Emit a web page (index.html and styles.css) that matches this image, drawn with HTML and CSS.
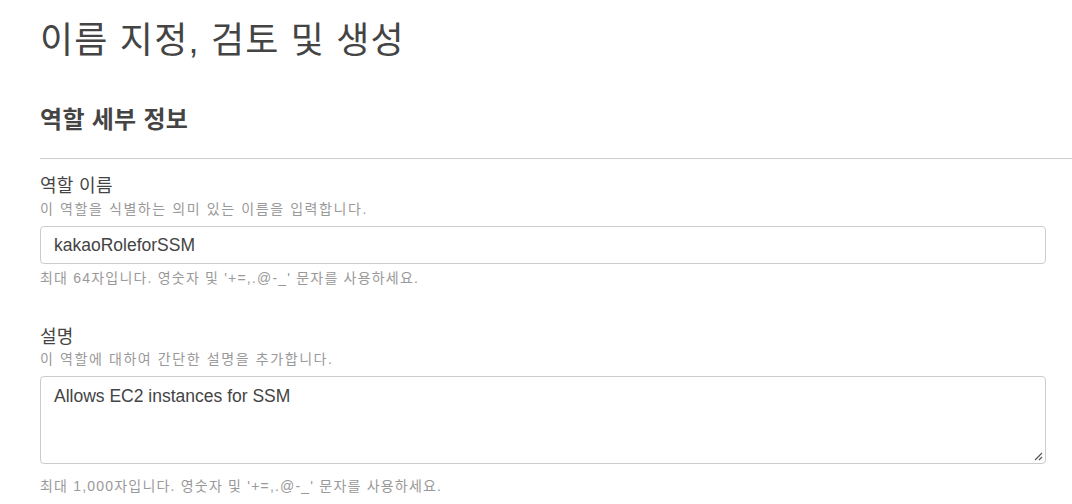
FILE: index.html
```html
<!DOCTYPE html>
<html lang="ko">
<head>
<meta charset="utf-8">
<link rel="stylesheet" href="styles.css">
</head>
<body>
<div class="page">
  <h1 class="title">이름 지정, 검토 및 생성</h1>
  <h2 class="section">역할 세부 정보</h2>
  <div class="divider"></div>
  <div class="field">
    <div class="label">역할 이름</div>
    <div class="desc">이 역할을 식별하는 의미 있는 이름을 입력합니다.</div>
    <div class="input">kakaoRoleforSSM</div>
    <div class="help">최대 64자입니다. 영숫자 및 '+=,.@-_' 문자를 사용하세요.</div>
  </div>
  <div class="field field2">
    <div class="label">설명</div>
    <div class="desc">이 역할에 대하여 간단한 설명을 추가합니다.</div>
    <div class="textarea">Allows EC2 instances for SSM
      <svg class="grip" width="10" height="10" viewBox="0 0 10 10"><path d="M9 2L2 9M9 6L6 9" stroke="#555" stroke-width="1.2" fill="none"/></svg>
    </div>
    <div class="help help2">최대 1,000자입니다. 영숫자 및 '+=,.@-_' 문자를 사용하세요.</div>
  </div>
</div>
</body>
</html>
```
FILE: styles.css
```css
html, body { margin: 0; padding: 0; background: #fff; }
body { font-family: "Liberation Sans", "Noto Sans CJK KR", sans-serif; color: #444; }
.page { padding: 0 0 0 40px; }
.title { margin: 0; padding-top: 19px; font-size: 36px; font-weight: 400; line-height: 44px; letter-spacing: 1.2px; color: #444; }
.section { margin: 42px 0 0; font-size: 24px; font-weight: 700; line-height: 30px; letter-spacing: 0.3px; color: #444; }
.divider { margin-top: 23px; height: 1px; background: #ccc; }
.field { padding-top: 15px; }
.field2 { padding-top: 37px; }
.label { font-size: 18px; line-height: 24px; color: #444; letter-spacing: 0.3px; }
.desc { font-size: 14px; line-height: 22px; color: #999; letter-spacing: 1.6px; }
.field2 .desc { line-height: 20px; }
.input { margin-top: 6px; width: 1006px; box-sizing: border-box; height: 38px; border: 1px solid #ccc; border-radius: 4px; padding: 0 13px; font-size: 17.5px; line-height: 36px; color: #444; }
.textarea { position: relative; margin-top: 7px; width: 1006px; box-sizing: border-box; height: 88px; border: 1px solid #ccc; border-radius: 4px; padding: 7px 13px; font-size: 17.5px; line-height: 24px; color: #444; }
.grip { position: absolute; right: 2px; bottom: 2px; }
.help { margin-top: 4px; font-size: 14px; line-height: 20px; color: #999; letter-spacing: 1.2px; }
.help2 { margin-top: 12px; }
```
